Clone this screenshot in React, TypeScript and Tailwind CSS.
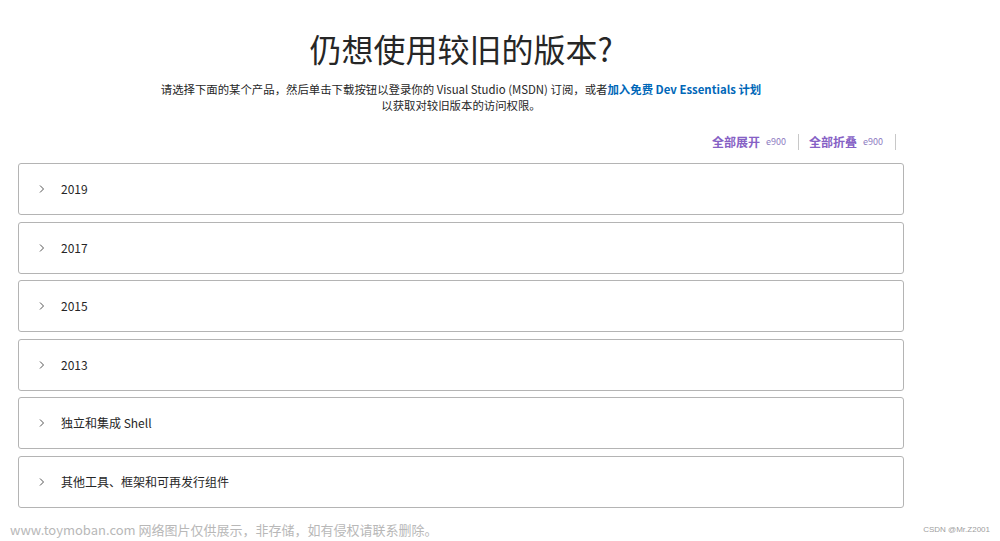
import React from 'react';

const ITEMS = ['2019', '2017', '2015', '2013', '独立和集成 Shell', '其他工具、框架和可再发行组件'];

const FONT = '"Noto Sans CJK SC", "Open Sans", sans-serif';

const Chevron = () => (
  <svg width="8" height="10" viewBox="0 0 8 10" fill="none" className="shrink-0">
    <path d="M2 1.5 L5.5 5 L2 8.5" stroke="#555" strokeWidth="1" />
  </svg>
);

export default function App() {
  return (
    <div
      className="w-[1000px] h-[541px] bg-white relative overflow-hidden text-[#262626]"
      style={{ fontFamily: FONT }}
    >
      <div className="ml-[18px] w-[886px] flex flex-col">
        <h1 className="mt-[24px] text-center text-[32px] leading-[48px] font-normal text-[#262626]">
          仍想使用较旧的版本?
        </h1>
        <p className="mt-[9px] text-center text-[11.4px] leading-[16px] text-[#262626]">
          请选择下面的某个产品，然后单击下载按钮以登录你的 Visual Studio (MSDN) 订阅，或者
          <a className="text-[#0067b8] font-semibold">加入免费 Dev Essentials 计划</a>
          <br />
          以获取对较旧版本的访问权限。
        </p>
        <div className="mt-[21px] flex justify-end items-center pr-[8px] h-[16px]">
          <span className="text-[12px] font-bold text-[#8661c5]">全部展开</span>
          <span className="ml-[6px] text-[9px] text-[#8c7bbf]">e900</span>
          <span className="ml-[12px] w-px h-[16px] bg-[#c8c8c8]" />
          <span className="ml-[10px] text-[12px] font-bold text-[#8661c5]">全部折叠</span>
          <span className="ml-[6px] text-[9px] text-[#8c7bbf]">e900</span>
          <span className="ml-[12px] w-px h-[16px] bg-[#c8c8c8]" />
        </div>
        <div className="mt-[13px] flex flex-col gap-[6.5px]">
          {ITEMS.map((it) => (
            <div
              key={it}
              className="h-[52px] border border-[#b4b4b4] rounded-[3px] flex items-center pl-[19px] gap-[15px]"
            >
              <Chevron />
              <span className="text-[12px] text-[#262626]">{it}</span>
            </div>
          ))}
        </div>
      </div>
      <div className="absolute left-[10px] bottom-[2px] text-[13px] text-[#b8b8b8]">
        www.toymoban.com 网络图片仅供展示，非存储，如有侵权请联系删除。
      </div>
      <div className="absolute right-[10px] bottom-[5px] text-[8px] text-[#a0a0a0]" style={{ fontFamily: '"Liberation Sans", sans-serif' }}>
        CSDN @Mr.Z2001
      </div>
    </div>
  );
}
